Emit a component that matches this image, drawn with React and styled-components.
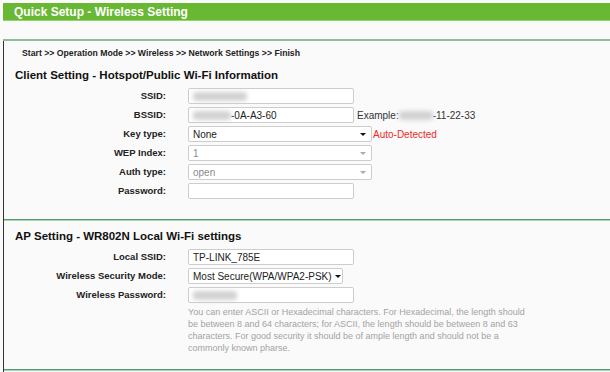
import React from 'react'
import styled, {createGlobalStyle} from 'styled-components'

const Global = createGlobalStyle`
  html, body {
    margin: 0;
    padding: 0;
    background: #fafafa;
    font-family: "Liberation Sans", Arial, sans-serif;
  }
`

const Page = styled.div`
  padding: 3px 0 0 3px;
  height: 369px;
  display: flex;
  flex-direction: column;
`

const Header = styled.div`
  height: 17px;
  background: #68b833;
  border-bottom: 1px solid #92d46c;
  display: flex;
  align-items: center;
  padding-left: 11px;
`

const HeaderTitle = styled.div`
  color: #fff;
  font-weight: bold;
  font-size: 12px;
  line-height: 14px;
`

const Rule = styled.div`
  margin-top: 18px;
  height: 2px;
  background: #8fbba0;
`

const Content = styled.div`
  flex: 1;
  border-left: 1px solid #333;
  display: flex;
  flex-direction: column;
`

const Breadcrumb = styled.div`
  padding: 6px 0 0 18px;
  font-size: 8.7px;
  line-height: 12px;
  font-weight: bold;
  color: #222;
`

const SectionTitle = styled.div`
  padding-left: 11px;
  margin-top: ${p => p.$top}px;
  font-size: 11.5px;
  line-height: 14px;
  font-weight: bold;
  color: #111;
`

const Form = styled.div`
  display: grid;
  grid-template-columns: 162px 1fr;
  column-gap: 22px;
  row-gap: 3px;
  margin-top: 6px;
`

const Label = styled.div`
  text-align: right;
  font-size: 9.5px;
  font-weight: bold;
  color: #222;
  line-height: 16px;
`

const Cell = styled.div`
  display: flex;
  align-items: center;
  height: 16px;
`

const Field = styled.div`
  box-sizing: border-box;
  width: ${p => p.$w || 166}px;
  height: 16px;
  border: 1px solid #cdcdcd;
  border-radius: 2px;
  background: #fff;
  display: flex;
  align-items: center;
  padding: 0 4px;
  font-size: 10px;
  color: ${p => (p.$off ? '#8a8a8a' : '#222')};
  white-space: nowrap;
`

const SelectBox = styled(Field)`
  justify-content: space-between;
  padding-right: 5px;
`

const Caret = styled.span`
  width: 0;
  height: 0;
  margin-left: 3px;
  border-left: 3px solid transparent;
  border-right: 3px solid transparent;
  border-top: 3px solid ${p => (p.$off ? '#aaa' : '#111')};
`

const Blur = styled.span`
  display: inline-block;
  width: ${p => p.$w}px;
  height: 9px;
  background: #d2d2d2;
  border-radius: 3px;
  filter: blur(2px);
`

const Note = styled.span`
  margin-left: ${p => p.$gap || 3}px;
  font-size: 10px;
  color: ${p => p.$color || '#333'};
  display: flex;
  align-items: center;
  white-space: nowrap;
`

const Help = styled.div`
  grid-column: 2;
  font-size: 9px;
  line-height: 12px;
  color: #a3a3a3;
  white-space: nowrap;
`

const Divider = styled.div`
  margin-top: ${p => p.$top}px;
  height: 1px;
  border-top: 1px solid #519d70;
  background: #a9d2b8;
`

function Select({value, w, off}) {
  return (
    <SelectBox $w={w || 184} $off={off}>
      <span>{value}</span>
      <Caret $off={off} />
    </SelectBox>
  )
}

export default function App() {
  return (
    <Page>
      <Global />
      <Header>
        <HeaderTitle>Quick Setup - Wireless Setting</HeaderTitle>
      </Header>
      <Rule />
      <Content>
        <Breadcrumb>Start &gt;&gt; Operation Mode &gt;&gt; Wireless &gt;&gt; Network Settings &gt;&gt; Finish</Breadcrumb>
        <SectionTitle $top={9}>Client Setting - Hotspot/Public Wi-Fi Information</SectionTitle>
        <Form>
          <Label>SSID:</Label>
          <Cell>
            <Field><Blur $w={54} /></Field>
          </Cell>
          <Label>BSSID:</Label>
          <Cell>
            <Field><Blur $w={38} />-0A-A3-60</Field>
            <Note>Example:<Blur $w={34} />-11-22-33</Note>
          </Cell>
          <Label>Key type:</Label>
          <Cell>
            <Select value="None" />
            <Note $gap={1} $color="#f02a2a">Auto-Detected</Note>
          </Cell>
          <Label>WEP Index:</Label>
          <Cell>
            <Select value="1" off />
          </Cell>
          <Label>Auth type:</Label>
          <Cell>
            <Select value="open" off />
          </Cell>
          <Label>Password:</Label>
          <Cell>
            <Field />
          </Cell>
        </Form>
        <Divider $top={20} />
        <SectionTitle $top={8}>AP Setting - WR802N Local Wi-Fi settings</SectionTitle>
        <Form>
          <Label>Local SSID:</Label>
          <Cell>
            <Field>TP-LINK_785E</Field>
          </Cell>
          <Label>Wireless Security Mode:</Label>
          <Cell>
            <Select value="Most Secure(WPA/WPA2-PSK)" w={155} />
          </Cell>
          <Label>Wireless Password:</Label>
          <Cell>
            <Field><Blur $w={44} /></Field>
          </Cell>
          <Help>
            You can enter ASCII or Hexadecimal characters. For Hexadecimal, the length should<br />
            be between 8 and 64 characters; for ASCII, the length should be between 8 and 63<br />
            characters. For good security it should be of ample length and should not be a<br />
            commonly known pharse.
          </Help>
        </Form>
        <Divider $top={15} />
      </Content>
    </Page>
  )
}
